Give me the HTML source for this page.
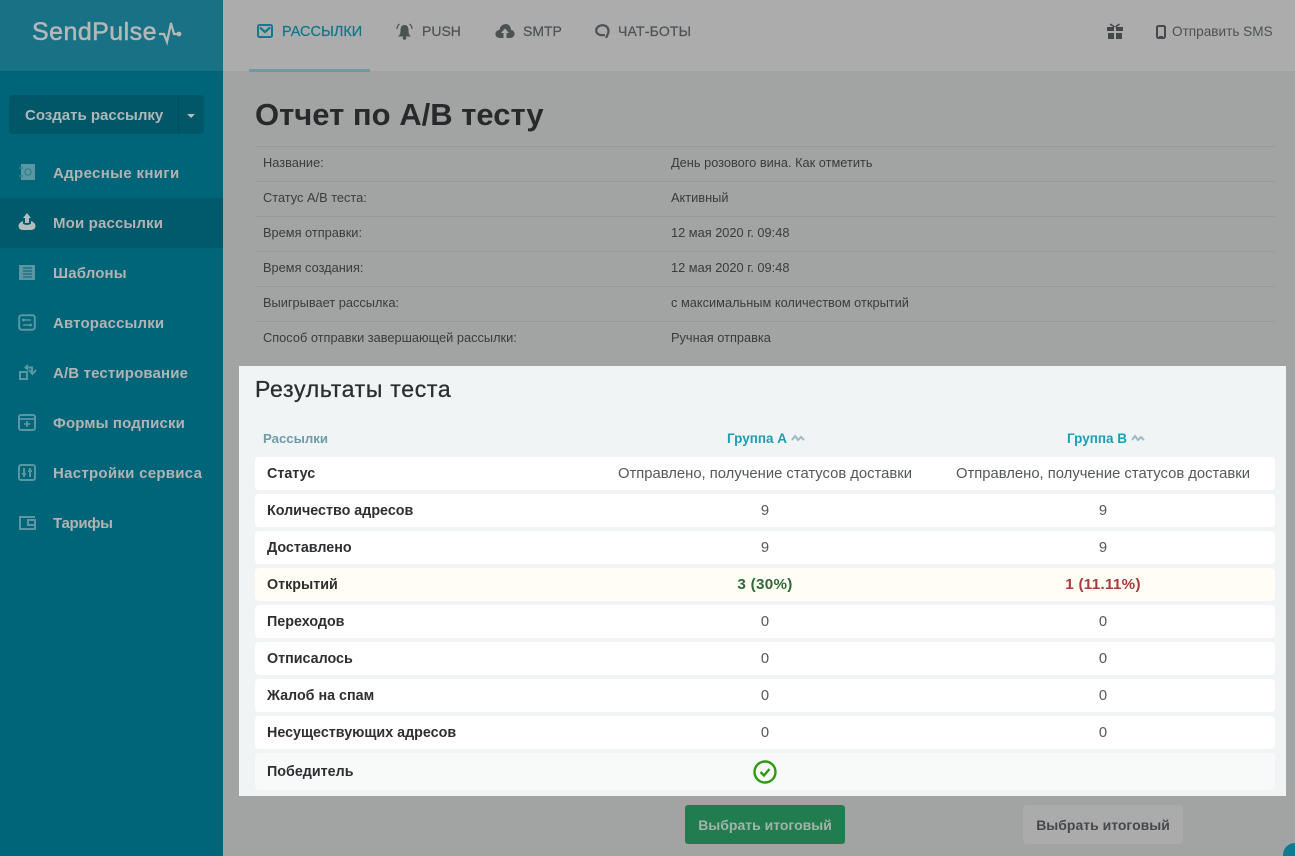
<!DOCTYPE html>
<html><head><meta charset="utf-8">
<style>
html,body{margin:0;padding:0;width:1295px;height:856px;overflow:hidden}
#w{position:relative;width:1295px;height:856px;overflow:hidden;background:#a2a4a3;font-family:"Liberation Sans","DejaVu Sans",sans-serif;color:#2c2e30}
.a,.t{position:absolute}
.t{white-space:nowrap;line-height:20px}
.c{transform:translateX(-50%)}
.nav{font-size:15px;font-weight:700;color:#b3b3b3;left:53px;letter-spacing:.15px}
.top{font-size:14px;top:21px;color:#4c5154;-webkit-text-stroke:.2px currentColor}
.lb{font-size:12.8px;left:263px;color:#3a3c3d}
.vl{font-size:12.8px;left:671px;color:#3a3c3d}
.ln{position:absolute;left:255px;width:1020px;height:1px;background:#929b9b}
.row{position:absolute;left:255px;width:1020px;height:33px;background:#fff;border-radius:4px}
.k{font-size:14.3px;font-weight:700;left:267px;color:#2d2f31}
.v{font-size:14.8px;color:#55585a}
.h{font-size:15.2px;font-weight:700;letter-spacing:.3px}
svg{position:absolute;overflow:visible}
</style></head><body><div id="w">
<div class="a" style="left:0;top:0;width:223px;height:856px;background:#016579"></div>
<div class="a" style="left:0;top:0;width:223px;height:71px;background:#187184"></div>
<div class="a" style="left:223px;top:0;width:1072px;height:71px;background:#acacac"></div>
<div class="a" style="left:223px;top:71px;width:1072px;height:3px;background:#a1a3a2"></div>
<div class="t" style="left:32px;top:15px;font-size:25px;line-height:34px;color:#b5b8b8;-webkit-text-stroke:.5px #b5b8b8;letter-spacing:.45px">SendPulse</div>
<svg style="left:158px;top:21px" width="26" height="24"><path d="M1 13H6L9 21L13 2L16 13H21" fill="none" stroke="#b5b8b8" stroke-width="2.2"/><circle cx="21" cy="13" r="2.4" fill="#b5b8b8"/></svg>

<div class="a" style="left:9px;top:95px;width:195px;height:39px;background:#015768;border-radius:4px"></div>
<div class="a" style="left:178px;top:95px;width:1px;height:39px;background:#014f5e"></div>
<div class="t" style="left:25px;top:106px;font-size:15px;font-weight:700;color:#afb8b9">Создать рассылку</div>
<div class="a" style="left:187px;top:114px;border:4px solid transparent;border-top-color:#b5bbbb;border-bottom:0"></div>

<div class="a" style="left:0;top:198px;width:223px;height:50px;background:#015a6b"></div>
<div class="t nav" style="top:164px;letter-spacing:.35px">Адресные книги</div>
<div class="t nav" style="top:214px">Мои рассылки</div>
<div class="t nav" style="top:264px">Шаблоны</div>
<div class="t nav" style="top:314px">Авторассылки</div>
<div class="t nav" style="top:364px">A/B тестирование</div>
<div class="t nav" style="top:414px">Формы подписки</div>
<div class="t nav" style="top:464px;letter-spacing:.28px">Настройки сервиса</div>
<div class="t nav" style="top:514px;letter-spacing:-.3px">Тарифы</div>

<svg style="left:19px;top:164px" width="17" height="17"><rect x="2" y="0" width="14" height="16" fill="#5b97a3"/><circle cx="9" cy="8" r="3.2" fill="none" stroke="#2c7d8e"/><path d="M0 4H4M0 12H4" stroke="#2c8497" stroke-width="1.4"/></svg>
<svg style="left:18px;top:213px" width="18" height="18"><path d="M9 0L13 5H11V10H7V5H5Z" fill="#b4bcbd"/><path d="M5 8V10C5 12.500 13 12.500 13 10V8C15.500 9 17.500 10.500 17.500 13C17.500 15.500 15.500 17 13 17H5C2.500 17 .5 15.500 .5 13C.5 10.500 2.500 9 5 8Z" fill="#b4bcbd"/></svg>
<svg style="left:18px;top:264px" width="18" height="17"><rect x="1" y="1" width="16" height="15" fill="#5b97a3"/><path d="M5 4H14M5 7H14M5 10H14M5 13H14" stroke="#116c80" stroke-width="1.2"/></svg>
<svg style="left:18px;top:314px" width="18" height="17"><rect x="1.200" y="1.200" width="15.600" height="14.600" rx="2.500" fill="none" stroke="#5b97a3" stroke-width="2"/><path d="M7 6H13M5 11H11" stroke="#5b97a3" stroke-width="1.400"/><circle cx="5.500" cy="6" r="1.500" fill="#5b97a3"/><circle cx="12.500" cy="11" r="1.500" fill="#5b97a3"/></svg>
<svg style="left:18px;top:364px" width="18" height="17"><rect x="2" y="8" width="7" height="7" fill="none" stroke="#5b97a3" stroke-width="2"/><path d="M8 3.500H14V9M11 6L14.500 10L18 6" fill="none" stroke="#5b97a3" stroke-width="2"/><path d="M10 0L6 3.500L10 7Z" fill="#5b97a3"/></svg>
<svg style="left:18px;top:414px" width="18" height="17"><rect x="1" y="1" width="16" height="15" rx="2" fill="none" stroke="#5b97a3" stroke-width="2"/><path d="M1 5H17M9 7V13M6 10H12" stroke="#5b97a3" stroke-width="1.700"/></svg>
<svg style="left:18px;top:464px" width="18" height="17"><rect x="1" y="1" width="16" height="15" rx="2" fill="none" stroke="#5b97a3" stroke-width="2"/><path d="M6 4V13M12 4V13" stroke="#5b97a3" stroke-width="2"/><path d="M4 10H8M10 7H14" stroke="#5b97a3" stroke-width="2"/></svg>
<svg style="left:18px;top:514px" width="18" height="17"><path d="M17 3H2V15H17V6H10V11H17" fill="none" stroke="#5b97a3" stroke-width="2"/></svg>

<div class="a" style="left:249px;top:69px;width:121px;height:3px;background:#6c9ba7"></div>
<svg style="left:257px;top:24px" width="16" height="14"><rect x="1" y="1" width="14" height="12" rx="1.500" fill="none" stroke="#0f7a90" stroke-width="2"/><path d="M3 3.500L8 8L13 3.500" fill="none" stroke="#0f7a90" stroke-width="2.200"/></svg>
<div class="t top" style="left:282px;color:#0f7589;font-size:14.500px;top:22px">РАССЫЛКИ</div>
<svg style="left:396px;top:23px" width="17" height="17"><path d="M8.500 2C5 2 4.500 5 4.500 8C4.500 11 3.500 12 2 13.500H15C13.500 12 12.500 11 12.500 8C12.500 5 12 2 8.500 2Z" fill="#4c5154"/><circle cx="8.500" cy="15" r="1.800" fill="#4c5154"/><path d="M1 6C1 4 2 2 3.500 1M16 6C16 4 15 2 13.500 1" fill="none" stroke="#4c5154" stroke-width="1.200"/></svg>
<div class="t top" style="left:422px">PUSH</div>
<svg style="left:495px;top:24px" width="20" height="15"><path d="M5 14C1.500 14 0 11.500 .5 9C1 7 3 6 4.500 6C5 2 8 0 11 0C14 0 16 3 16 6C18 6 20 8 19.500 10.500C19 12.500 17.500 14 15 14Z" fill="#4c5154"/><path d="M10 4.500L14 9H11.500V15H8.500V9H6Z" fill="#acacac"/></svg>
<div class="t top" style="left:523px">SMTP</div>
<svg style="left:595px;top:24px" width="15" height="15"><path d="M11.500 14C11 12 13.500 11 13.500 7C13.500 3.500 11 1.200 7.500 1.200C4 1.200 1.200 3.500 1.200 6.500C1.200 9.500 4 11.200 7.500 11.200H10" fill="none" stroke="#4c5154" stroke-width="2.200"/></svg>
<div class="t top" style="left:618px;letter-spacing:.2px">ЧАТ-БОТЫ</div>
<svg style="left:1107px;top:23px" width="16" height="17"><path d="M0 4H7V8H0ZM9 4H16V8H9ZM1 10H7V16H1ZM9 10H15V16H9Z" fill="#43484b"/><path d="M3 1L7.500 4M12.500 1L8.500 4" stroke="#43484b" stroke-width="1.600"/></svg>
<svg style="left:1156px;top:25px" width="10" height="14"><rect x="1" y="1" width="8" height="12" rx="1.500" fill="none" stroke="#43484b" stroke-width="2"/><path d="M3 12H7" stroke="#43484b" stroke-width="2"/></svg>
<div class="t top" style="left:1172px;font-size:13.600px;top:22px;-webkit-text-stroke:0">Отправить SMS</div>

<div class="t" style="left:255px;top:95px;font-size:31px;line-height:40px;font-weight:700;color:#272a2b">Отчет по A/B тесту</div>
<div class="ln" style="top:146px"></div><div class="ln" style="top:181px"></div><div class="ln" style="top:216px"></div><div class="ln" style="top:251px"></div><div class="ln" style="top:286px"></div><div class="ln" style="top:321px"></div>
<div class="t lb" style="top:153px">Название:</div><div class="t vl" style="top:153px">День розового вина. Как отметить</div>
<div class="t lb" style="top:188px">Статус A/B теста:</div><div class="t vl" style="top:188px">Активный</div>
<div class="t lb" style="top:223px">Время отправки:</div><div class="t vl" style="top:223px">12 мая 2020 г. 09:48</div>
<div class="t lb" style="top:258px">Время создания:</div><div class="t vl" style="top:258px">12 мая 2020 г. 09:48</div>
<div class="t lb" style="top:293px">Выигрывает рассылка:</div><div class="t vl" style="top:293px">с максимальным количеством открытий</div>
<div class="t lb" style="top:328px">Способ отправки завершающей рассылки:</div><div class="t vl" style="top:328px">Ручная отправка</div>

<div class="a" style="left:239px;top:366px;width:1047px;height:430px;background:#f0f4f5"></div>
<div class="t" style="left:255px;top:375px;font-size:23px;line-height:28px;color:#2c2e30;letter-spacing:.7px;-webkit-text-stroke:.3px #2c2e30">Результаты теста</div>
<div class="t" style="left:263px;top:429px;font-size:13.200px;font-weight:700;color:#6f9aa8">Рассылки</div>
<div class="t" style="left:727px;top:429px;font-size:13.500px;font-weight:700;color:#1a9fb5">Группа А</div>
<div class="t" style="left:1067px;top:429px;font-size:13.500px;font-weight:700;color:#1a9fb5">Группа В</div>
<svg style="left:791px;top:434px" width="14" height="9"><path d="M1 6L4 2L7 6L10 3L13 6" fill="none" stroke="#9dbac4" stroke-width="2"/></svg>
<svg style="left:1131px;top:434px" width="14" height="9"><path d="M1 6L4 2L7 6L10 3L13 6" fill="none" stroke="#9dbac4" stroke-width="2"/></svg>

<div class="row" style="top:457px"></div>
<div class="row" style="top:494px"></div>
<div class="row" style="top:531px"></div>
<div class="row" style="top:568px;background:#fffdf4"></div>
<div class="row" style="top:605px"></div>
<div class="row" style="top:642px"></div>
<div class="row" style="top:679px"></div>
<div class="row" style="top:716px"></div>
<div class="row" style="top:753px;height:37px;background:#f8f9f9"></div>

<div class="t k" style="top:464px">Статус</div>
<div class="t v c" style="left:765px;top:464px">Отправлено, получение статусов доставки</div>
<div class="t v c" style="left:1103px;top:464px">Отправлено, получение статусов доставки</div>
<div class="t k" style="top:501px">Количество адресов</div>
<div class="t v c" style="left:765px;top:501px">9</div><div class="t v c" style="left:1103px;top:501px">9</div>
<div class="t k" style="top:538px">Доставлено</div>
<div class="t v c" style="left:765px;top:538px">9</div><div class="t v c" style="left:1103px;top:538px">9</div>
<div class="t k" style="top:575px">Открытий</div>
<div class="t v c h" style="left:765px;top:575px;color:#2f6b3a">3 (30%)</div>
<div class="t v c h" style="left:1103px;top:575px;color:#a73c3c">1 (11.11%)</div>
<div class="t k" style="top:612px">Переходов</div>
<div class="t v c" style="left:765px;top:612px">0</div><div class="t v c" style="left:1103px;top:612px">0</div>
<div class="t k" style="top:649px">Отписалось</div>
<div class="t v c" style="left:765px;top:649px">0</div><div class="t v c" style="left:1103px;top:649px">0</div>
<div class="t k" style="top:686px">Жалоб на спам</div>
<div class="t v c" style="left:765px;top:686px">0</div><div class="t v c" style="left:1103px;top:686px">0</div>
<div class="t k" style="top:723px">Несуществующих адресов</div>
<div class="t v c" style="left:765px;top:723px">0</div><div class="t v c" style="left:1103px;top:723px">0</div>
<div class="t k" style="top:762px">Победитель</div>
<svg style="left:753px;top:760px" width="24" height="24"><circle cx="12" cy="12" r="10.500" fill="none" stroke="#2f9a0f" stroke-width="2.400"/><path d="M7.500 12L11 15.500L16.500 9" fill="none" stroke="#2f9a0f" stroke-width="2.400"/></svg>

<div class="a" style="left:685px;top:805px;width:160px;height:39px;background:#217d50;border-radius:3px"></div>
<div class="t c" style="left:765px;top:815px;font-size:14px;font-weight:700;color:#a3b3aa">Выбрать итоговый</div>
<div class="a" style="left:1023px;top:805px;width:160px;height:39px;background:#ababab;border-radius:4px"></div>
<div class="t c" style="left:1103px;top:815px;font-size:14px;font-weight:700;color:#44494c">Выбрать итоговый</div>
<div class="a" style="left:1283px;top:843px;width:24px;height:24px;border-radius:50%;background:#0f7a90"></div>
</div></body></html>
